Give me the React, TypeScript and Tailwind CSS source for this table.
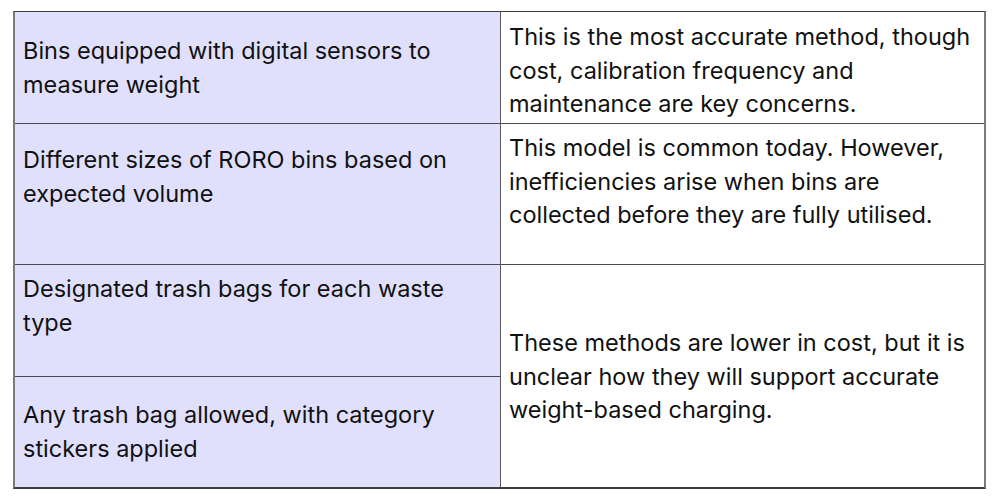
import React from "react";

export default function App() {
  const font = { fontFamily: "Inter, 'Noto Sans', sans-serif" };
  return (
    <div className="w-[1000px] h-[500px] bg-white" style={font}>
      <div className="ml-[13px] pt-[11px]">
        <div className="w-[973px] grid grid-cols-[486px_483px] grid-rows-[112px_141px_112px_110px] border-t border-t-[#3f3f3f] border-b-2 border-b-[#3f3f3f] border-l-2 border-l-[#7a7a7a] border-r-2 border-r-[#7a7a7a] text-[23.5px] leading-[33.5px] text-[#111111]">
          <div className="bg-[#e0e0fc] border-r border-r-[#5a5a5a] border-b border-b-[#4a4a4a] pl-2 pr-4 pt-[22px]">
            Bins equipped with digital sensors to measure weight
          </div>
          <div className="bg-white border-b border-b-[#4a4a4a] pl-2 pt-[8px]">
            This is the most accurate method, though cost, calibration frequency and maintenance are key concerns.
          </div>
          <div className="bg-[#e0e0fc] border-r border-r-[#5a5a5a] border-b border-b-[#4a4a4a] pl-2 pr-4 pt-[19px]">
            Different sizes of RORO bins based on expected volume
          </div>
          <div className="bg-white border-b border-b-[#4a4a4a] pl-2 pt-[7px]">
            This model is common today. However, inefficiencies arise when bins are collected before they are fully utilised.
          </div>
          <div className="bg-[#e0e0fc] border-r border-r-[#5a5a5a] border-b border-b-[#4a4a4a] pl-2 pr-4 pt-[7px]">
            Designated trash bags for each waste type
          </div>
          <div className="row-span-2 bg-white pl-2 pt-[61px]">
            These methods are lower in cost, but it is unclear how they will support accurate weight-based charging.
          </div>
          <div className="bg-[#e0e0fc] border-r border-r-[#5a5a5a] pl-2 pr-4 pt-[21px]">
            Any trash bag allowed, with category stickers applied
          </div>
        </div>
      </div>
    </div>
  );
}
